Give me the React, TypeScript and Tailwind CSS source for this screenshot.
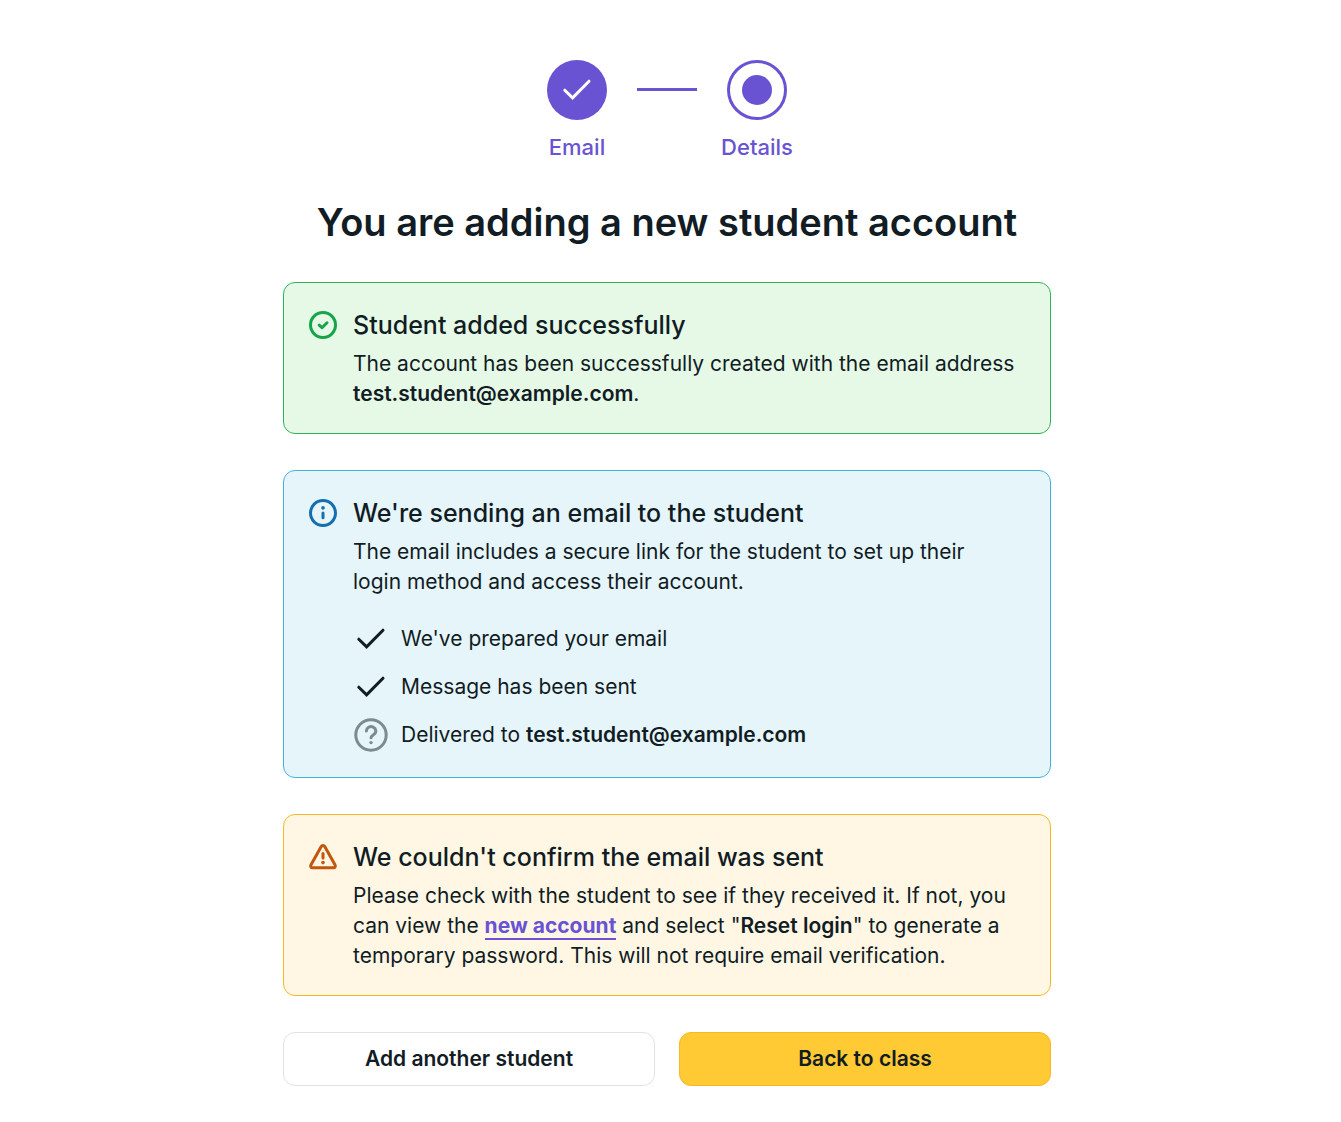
import type { ReactNode } from "react";

const toneStyles = {
  success: "border-[#2fb457] bg-[#e6f9e6]",
  info: "border-[#45b0dc] bg-[#e6f5fa]",
  warning: "border-[#f9b725] bg-[#fff7e4]",
};

function CheckIcon() {
  return (
    <svg viewBox="0 0 36 36" className="size-9 shrink-0" fill="none" stroke="currentColor" strokeWidth={3} strokeLinecap="round" aria-hidden="true">
      <path d="M5.8 18.2l7.8 7.6L30 9.2" />
    </svg>
  );
}

function QuestionIcon() {
  return (
    <svg viewBox="0 0 36 36" className="size-9 shrink-0 text-[#7c8b8f]" fill="none" stroke="currentColor" strokeWidth={3} strokeLinecap="round" aria-hidden="true">
      <circle cx="18" cy="18" r="15.2" />
      <path d="M13.4 13.9a4.7 4.3 0 1 1 7.6 3.4c-1.8 1.3-3 1.8-3 3.4" />
      <circle cx="18" cy="25.6" r="1.7" fill="currentColor" stroke="none" />
    </svg>
  );
}

function SuccessIcon() {
  return (
    <svg viewBox="0 0 30 30" className="size-[30px] text-[#16a34a]" fill="none" stroke="currentColor" strokeWidth={3} strokeLinecap="round" strokeLinejoin="round" aria-hidden="true">
      <circle cx="15" cy="15" r="12.5" />
      <path d="M11.2 15.2l2.8 2.5 5-4.9" />
    </svg>
  );
}

function InfoIcon() {
  return (
    <svg viewBox="0 0 30 30" className="size-[30px] text-[#146eb0]" fill="none" stroke="currentColor" strokeWidth={3} strokeLinecap="round" aria-hidden="true">
      <circle cx="15" cy="15" r="12.5" />
      <path d="M15 15v4.8" />
      <circle cx="15" cy="9.9" r="1.8" fill="currentColor" stroke="none" />
    </svg>
  );
}

function WarningIcon() {
  return (
    <svg viewBox="0 0 30 30" className="size-[30px] text-[#c2570c]" fill="none" stroke="currentColor" strokeWidth={3} strokeLinecap="round" strokeLinejoin="round" aria-hidden="true">
      <path d="M13.1 4.7 2.9 23.1a1.8 1.8 0 0 0 1.6 2.7h21a1.8 1.8 0 0 0 1.6-2.7L16.9 4.7a2.2 2.2 0 0 0-3.8 0Z" />
      <path d="M15 11.4v4.6" />
      <circle cx="15" cy="20.6" r="1.8" fill="currentColor" stroke="none" />
    </svg>
  );
}

function Step({ label, children }: { label: string; children: ReactNode }) {
  return (
    <li className="flex w-[60px] flex-col items-center gap-3 text-[22px] leading-[30px] font-medium">
      {children}
      <span>{label}</span>
    </li>
  );
}

function Notice({ tone, icon, title, children }: { tone: keyof typeof toneStyles; icon: ReactNode; title: string; children: ReactNode }) {
  return (
    <section className={`flex gap-[15px] rounded-xl border p-6 ${toneStyles[tone]}`}>
      <div className="flex h-9 w-[30px] shrink-0 items-center">{icon}</div>
      <div className="min-w-0 flex-1">
        <h2 className="mb-1.5 text-[25px] leading-9 font-medium">{title}</h2>
        {children}
      </div>
    </section>
  );
}

export default function App() {
  return (
    <main className="bg-white py-9 pr-[7px] font-['Inter',sans-serif] text-[21px] leading-[30px] text-[#111c24]">
      <div className="mx-auto flex max-w-3xl flex-col gap-9">
        <ol className="flex justify-center gap-[30px] pt-6 text-[#6953d3]">
          <Step label="Email">
            <div className="flex size-[60px] items-center justify-center rounded-full bg-[#6953d3] text-white">
              <CheckIcon />
            </div>
          </Step>
          <li aria-hidden="true" className="mt-7 h-[3px] w-[60px] bg-[#6953d3]" />
          <Step label="Details">
            <div className="flex size-[60px] items-center justify-center rounded-full border-3 border-[#6953d3]">
              <div className="size-[30px] rounded-full bg-[#6953d3]" />
            </div>
          </Step>
        </ol>

        <h1 className="text-center text-[38px] leading-12 font-semibold">You are adding a new student account</h1>

        <Notice tone="success" icon={<SuccessIcon />} title="Student added successfully">
          <p>
            The account has been successfully created with the email address{" "}
            <strong className="font-semibold">test.student@example.com</strong>.
          </p>
        </Notice>

        <Notice tone="info" icon={<InfoIcon />} title="We're sending an email to the student">
          <p className="pr-6">The email includes a secure link for the student to set up their login method and access their account.</p>
          <ul className="mt-6 flex flex-col gap-3">
            <li className="flex items-center gap-3">
              <CheckIcon />
              We've prepared your email
            </li>
            <li className="flex items-center gap-3">
              <CheckIcon />
              Message has been sent
            </li>
            <li className="flex items-center gap-3">
              <QuestionIcon />
              <span>
                Delivered to <strong className="font-semibold">test.student@example.com</strong>
              </span>
            </li>
          </ul>
        </Notice>

        <Notice tone="warning" icon={<WarningIcon />} title="We couldn't confirm the email was sent">
          <p>
            Please check with the student to see if they received it. If not, you can view the{" "}
            <a href="#account" className="border-b-2 border-[#6953d3] font-bold text-[#6953d3]">new account</a> and select "
            <strong className="font-semibold">Reset login</strong>" to generate a temporary password. This will not require email verification.
          </p>
        </Notice>

        <div className="grid grid-cols-2 gap-6">
          <button type="button" className="h-[54px] rounded-xl border border-[#dde3e4] bg-white font-semibold">Add another student</button>
          <button type="button" className="h-[54px] rounded-xl border border-[#f9b725] bg-[#ffca33] font-semibold">Back to class</button>
        </div>
      </div>
    </main>
  );
}
